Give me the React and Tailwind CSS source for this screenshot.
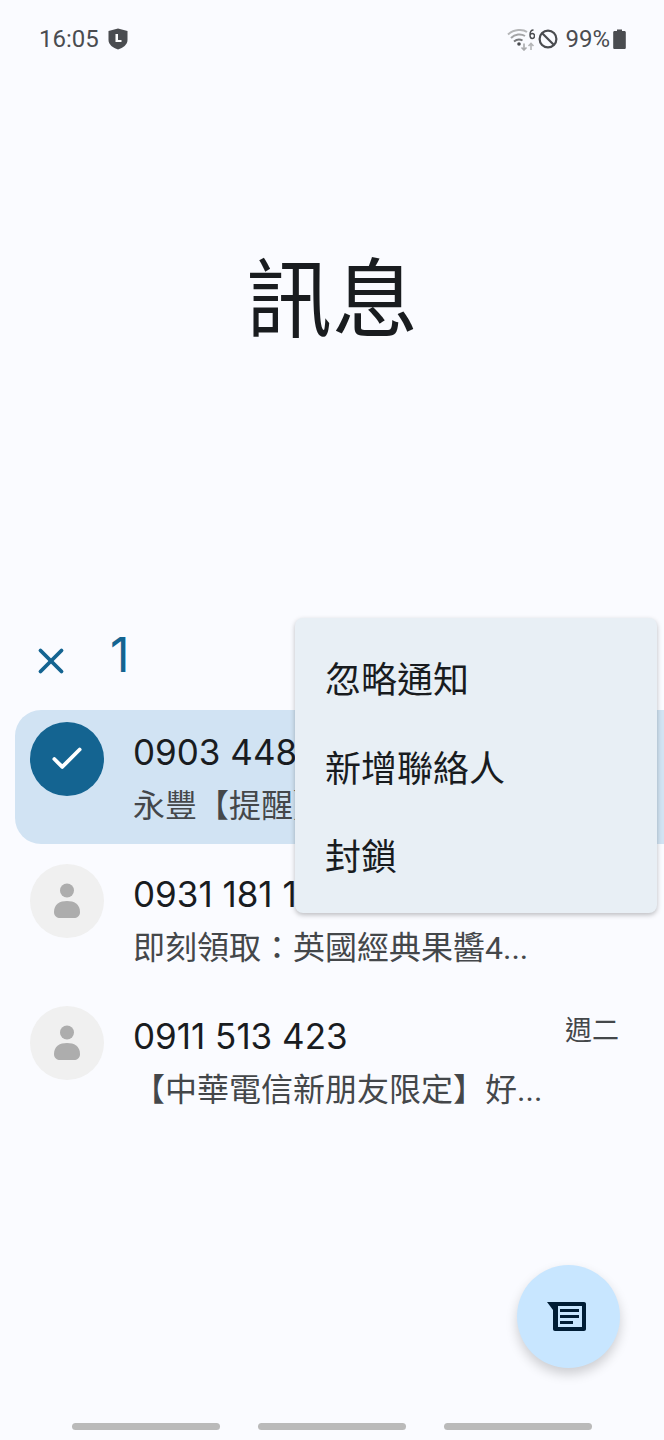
import React from "react";
import { X, Check } from "lucide-react";

const Shield = () => (
  <svg width="20" height="22" viewBox="0 0 20 22">
    <path d="M10 0.5 L19.5 3 V12 C19.5 16.5 15 20 10 21.5 C5 20 0.5 16.5 0.5 12 V3 Z" fill="#4a4c50" />
    <path d="M7.5 6 H10 V12 H13.5 V14 H7.5 Z" fill="#fff" />
  </svg>
);

const WifiIcon = () => (
  <svg width="28" height="24" viewBox="0 0 28 24" fill="none">
    <path d="M1 7.5 C7 2 16 2 20 5" stroke="#b5b6b8" strokeWidth="2" />
    <path d="M4 11 C8 7 14 6.5 18 9" stroke="#a3a4a6" strokeWidth="2" />
    <path d="M7 14.5 C10 12 13 12 15.5 13.5" stroke="#77787b" strokeWidth="2" />
    <circle cx="12" cy="17" r="1.8" fill="#4a4c50" />
    <path d="M17 16.5 V23 M14.5 20.5 L17 23 L19.5 20.5" stroke="#a9aaac" strokeWidth="1.6" />
    <path d="M24 23 V16.5 M21.5 19 L24 16.5 L26.5 19" stroke="#b5b6b8" strokeWidth="1.6" />
    <path d="M26.5 3 C24 3 23 5 23 8 C23 10.5 24 11.5 25.3 11.5 C26.8 11.5 27.5 10.3 27.5 9 C27.5 7.7 26.8 6.6 25.3 6.6 C24.5 6.6 23.5 7 23 8" stroke="#4a4c50" strokeWidth="1.5" />
  </svg>
);

const BlockIcon = () => (
  <svg width="20" height="20" viewBox="0 0 20 20" fill="none" stroke="#4a4c50" strokeWidth="2.2">
    <circle cx="10" cy="10" r="8.4" />
    <path d="M4 4 L16 16" />
  </svg>
);

const Battery = () => (
  <svg width="13" height="20" viewBox="0 0 13 20">
    <path d="M4 0.5 H9 V2 H11.5 C12.2 2 12.8 2.6 12.8 3.3 V18.7 C12.8 19.4 12.2 20 11.5 20 H1.5 C0.8 20 0.2 19.4 0.2 18.7 V3.3 C0.2 2.6 0.8 2 1.5 2 H4 Z" fill="#4a4c50" />
  </svg>
);

const Person = () => (
  <svg width="26" height="36" viewBox="0 0 26 36" fill="#adadad">
    <circle cx="13" cy="7.5" r="7" />
    <path d="M0 29 C0 21 6 18 13 18 C20 18 26 21 26 29 C26 33 23 35 20 35 H6 C3 35 0 33 0 29 Z" />
  </svg>
);

const Row = ({ name, preview, date, selected }) => (
  <div className={`flex items-start h-[134px] ml-[15px] pl-[15px] pt-[12px] rounded-l-[26px] ${selected ? "bg-[#d1e3f3]" : ""}`}>
    {selected ? (
      <div className="w-[74px] h-[74px] rounded-full bg-[#146491] flex items-center justify-center shrink-0">
        <Check size={38} color="#ffffff" strokeWidth={2.4} />
      </div>
    ) : (
      <div className="w-[74px] h-[74px] rounded-full bg-[#f0f0f0] flex items-center justify-center shrink-0">
        <Person />
      </div>
    )}
    <div className="ml-[29px] flex-1 min-w-0">
      <div className="flex justify-between items-start pr-[45px] pt-[8px]">
        <div className="font-['Inter','Noto_Sans_CJK_TC',sans-serif] font-normal text-[35px] leading-[44px] text-[#191c1f]">{name}</div>
        {date && <div className="text-[27px] leading-[36px] -mt-[1px] text-[#44474a]">{date}</div>}
      </div>
      <div className="text-[32px] leading-[40px] mt-[12px] text-[#44474a] whitespace-nowrap">{preview}</div>
    </div>
  </div>
);

const App = () => {
  return (
    <div className="relative w-[664px] h-[1440px] overflow-hidden bg-[#fafbff] font-['Roboto','Noto_Sans_CJK_TC',sans-serif]">
      {/* status bar */}
      <div className="flex items-center justify-between h-[78px] pl-[39px] pr-[38px] text-[#4a4c50] text-[24px]">
        <div className="flex items-center gap-[9px]">
          <span>16:05</span>
          <Shield />
        </div>
        <div className="flex items-center">
          <WifiIcon />
          <span className="ml-[3px]"><BlockIcon /></span>
          <span className="ml-[7px]">99%</span>
          <span className="ml-[3px]"><Battery /></span>
        </div>
      </div>

      {/* title */}
      <div className="h-[540px] pt-[172px] text-center text-[86px] leading-[104px] text-[#191c1f]">訊息</div>

      {/* selection bar */}
      <div className="flex items-center h-[72px] pl-[30px] text-[#146491]">
        <X size={42} strokeWidth={2.2} className="mt-[14px]" />
        <span className="font-['Inter',sans-serif] font-normal ml-[38px] text-[48px] leading-[60px] mt-[2px]">1</span>
      </div>

      {/* list */}
      <div className="mt-[20px] flex flex-col gap-[8px]">
        <Row selected name="0903 448 155" preview="永豐【提醒】您的帳戶" />
        <Row name="0931 181 123" preview="即刻領取：英國經典果醬4..." />
        <Row name="0911 513 423" preview="【中華電信新朋友限定】好..." date="週二" />
      </div>

      {/* overflow menu */}
      <div className="absolute left-[295px] top-[618px] w-[362px] h-[295px] rounded-[8px] bg-[#e8eff5] shadow-[0_2px_5px_rgba(0,0,0,0.25)] pt-[19px] pl-[30px] text-[#191c1f] text-[36px]">
        <div className="h-[88.5px] leading-[88px]">忽略通知</div>
        <div className="h-[88.5px] leading-[88px]">新增聯絡人</div>
        <div className="h-[88.5px] leading-[88px]">封鎖</div>
      </div>

      {/* fab */}
      <div className="absolute left-[517px] top-[1265px] w-[103px] h-[103px] rounded-full bg-[#c8e6ff] shadow-[0_6px_12px_rgba(0,0,0,0.18)] flex items-center justify-center">
        <svg width="40" height="30" viewBox="0 0 40 30" className="mr-[3px]">
          <path d="M0 0 H37 C38.2 0 39 0.8 39 2 V27 C39 28.2 38.2 29 37 29 H8 C6.8 29 6 28.2 6 27 V8 Z" fill="#001d35" />
          <path d="M11 4 H35 V25 H11 Z" fill="#c8e6ff" />
          <rect x="13" y="7" width="19" height="3" fill="#001d35" />
          <rect x="13" y="13" width="19" height="3" fill="#001d35" />
          <rect x="13" y="19" width="13" height="3" fill="#001d35" />
        </svg>
      </div>

      {/* nav bar */}
      <div className="absolute left-[72px] right-[72px] top-[1423px] flex justify-between">
        <div className="w-[148px] h-[7px] rounded-full bg-[#bababa]" />
        <div className="w-[148px] h-[7px] rounded-full bg-[#bababa]" />
        <div className="w-[148px] h-[7px] rounded-full bg-[#bababa]" />
      </div>
    </div>
  );
};

export default App;
